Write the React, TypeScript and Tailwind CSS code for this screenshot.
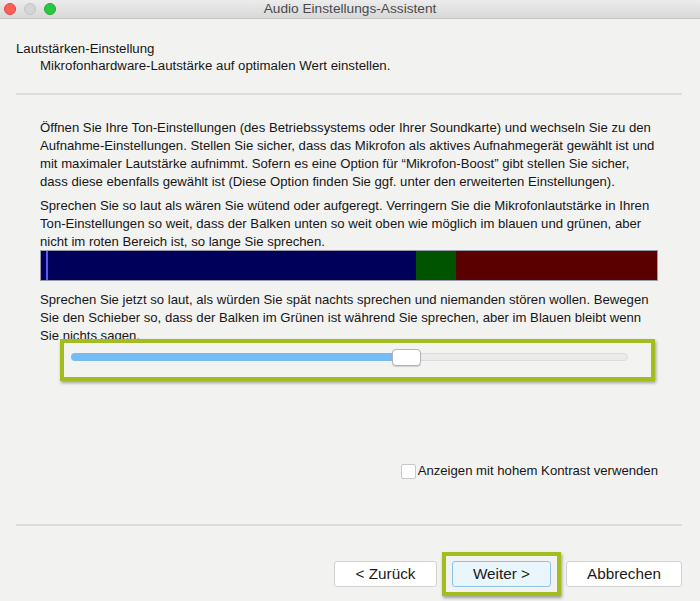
import { useState } from "react";

const font = "font-['Liberation_Sans',Arial,sans-serif]";

const TrafficLights = () => (
  <div className="flex items-center gap-[8px] pl-[4px]">
    <span className="w-[12px] h-[12px] rounded-full bg-[#fc5f57] border border-[#e2463f]" />
    <span className="w-[12px] h-[12px] rounded-full bg-[#d5d5d5] border border-[#c4c4c4]" />
    <span className="w-[12px] h-[12px] rounded-full bg-[#2ac840] border border-[#1aab29]" />
  </div>
);

const Line = ({ children }: { children: React.ReactNode }) => (
  <div className="whitespace-nowrap h-[18px] leading-[18px]">{children}</div>
);

const Button = ({ label, className }: { label: string; className: string }) => (
  <button className={`h-[26px] rounded-[3px] border text-[15.3px] text-[#1a1a1a] ${className}`}>
    {label}
  </button>
);

export default function App() {
  const [contrast, setContrast] = useState(false);
  const value = 60;

  return (
    <div className={`w-[700px] h-[601px] bg-[#f2f2f1] flex flex-col text-[13.15px] text-[#161616] ${font}`}>
      {/* title bar */}
      <div className="h-[19px] relative flex items-center bg-gradient-to-b from-[#ececec] to-[#d8d8d8] border-b border-[#c6c6c6]">
        <TrafficLights />
        <div className="absolute inset-0 flex items-center justify-center text-[13.7px] text-[#4a4a4a]">
          Audio Einstellungs-Assistent
        </div>
      </div>

      {/* header */}
      <div className="px-[16px] pt-[21px]">
        <div className="h-[17px] leading-[17px] text-[13.25px]">Lautstärken-Einstellung</div>
        <div className="h-[17px] leading-[17px] pl-[24px] text-[13.25px]">
          Mikrofonhardware-Lautstärke auf optimalen Wert einstellen.
        </div>
        <div className="mt-[19px] h-[2px] mr-[2px] bg-[#dddddd]" />
      </div>

      {/* body */}
      <div className="pl-[40px] pr-[42px] pt-[24px]">
        <Line>Öffnen Sie Ihre Ton-Einstellungen (des Betriebssystems oder Ihrer Soundkarte) und wechseln Sie zu den</Line>
        <Line>Aufnahme-Einstellungen. Stellen Sie sicher, dass das Mikrofon als aktives Aufnahmegerät gewählt ist und</Line>
        <Line>mit maximaler Lautstärke aufnimmt. Sofern es eine Option für “Mikrofon-Boost” gibt stellen Sie sicher,</Line>
        <Line>dass diese ebenfalls gewählt ist (Diese Option finden Sie ggf. unter den erweiterten Einstellungen).</Line>

        <div className="mt-[6px]">
          <Line>Sprechen Sie so laut als wären Sie wütend oder aufgeregt. Verringern Sie die Mikrofonlautstärke in Ihren</Line>
          <Line>Ton-Einstellungen so weit, dass der Balken unten so weit oben wie möglich im blauen und grünen, aber</Line>
          <Line>nicht im roten Bereich ist, so lange Sie sprechen.</Line>
        </div>

        {/* level meter */}
        <div className="-mt-[1px] w-[618px] h-[31px] flex border border-[#9a9aa8]">
          <div className="w-[375px] bg-[#00005a] flex">
            <div className="ml-[5px] w-[2px] bg-[#5a5af0]" />
          </div>
          <div className="w-[40px] bg-[#005400]" />
          <div className="flex-1 bg-[#5a0000]" />
        </div>

        <div className="mt-[10px]">
          <Line>Sprechen Sie jetzt so laut, als würden Sie spät nachts sprechen und niemanden stören wollen. Bewegen</Line>
          <Line>Sie den Schieber so, dass der Balken im Grünen ist während Sie sprechen, aber im Blauen bleibt wenn</Line>
          <Line>Sie nichts sagen.</Line>
        </div>

        {/* highlighted slider */}
        <div className="relative -mt-[6px] ml-[20px] w-[595px] h-[42px] border-[4px] border-[#a1bd1e] bg-[#f3f3f2] shadow-[1px_2px_3px_rgba(0,0,0,0.35)] pl-[7px] pt-[10px]">
          <div className="relative w-[557px] h-[8px] rounded-full bg-[#ebebeb] border border-[#dcdcdc]">
            <div className="absolute -left-px -top-px h-[8px] w-[332px] rounded-full bg-[#75bcf7]" />
            <div
              className="absolute top-[-5px] w-[29px] h-[17px] rounded-[4px] bg-white border border-[#b4b4b4] shadow-[0_1px_1px_rgba(0,0,0,0.15)]"
              style={{ left: `${(value / 100) * 557 - 14}px` }}
            />
          </div>
        </div>
      </div>

      {/* contrast checkbox */}
      <div className="mt-[82px] h-[16px] flex items-center justify-end pr-[42px]">
        <label className="flex items-center gap-[2px] cursor-pointer">
          <input
            type="checkbox"
            checked={contrast}
            onChange={() => setContrast(!contrast)}
            className="appearance-none w-[15px] h-[15px] bg-white border border-[#c8c8c8] rounded-[2px] m-0"
          />
          <span>Anzeigen mit hohem Kontrast verwenden</span>
        </label>
      </div>

      <div className="ml-[16px] mr-[18px] mt-[45px] h-[2px] bg-[#dddddd]" />

      {/* buttons */}
      <div className="flex items-center justify-end gap-[15px] pr-[18px] mt-[35px]">
        <Button label="< Zurück" className="w-[103px] bg-white border-[#d2d2d2]" />
        <div className="border-[4px] border-[#a1bd1e] px-[6px] py-[5px] -mx-[10px] -my-[9px] shadow-[1px_2px_3px_rgba(0,0,0,0.35)]">
          <Button label="Weiter >" className="block w-[99px] bg-[#eaf6fd] border-[#8fc3e6]" />
        </div>
        <Button label="Abbrechen" className="w-[116px] bg-white border-[#d2d2d2]" />
      </div>
    </div>
  );
}
